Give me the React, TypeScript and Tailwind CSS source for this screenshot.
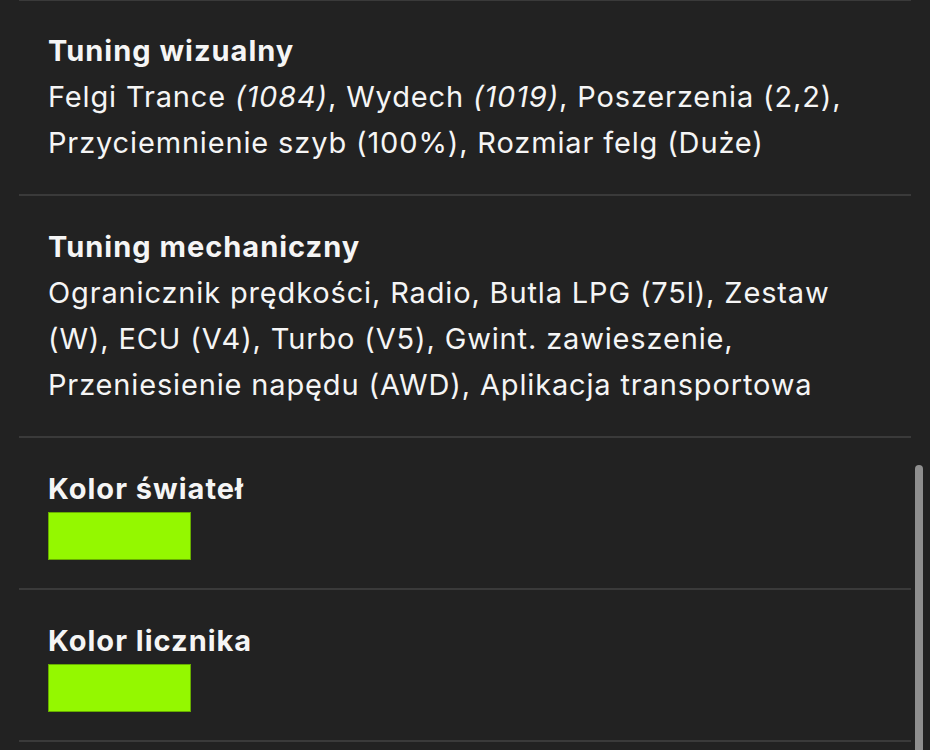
import React from "react";

type Section =
  | { kind: "text"; title: string; body: React.ReactNode }
  | { kind: "color"; title: string; color: string };

const sections: Section[] = [
  {
    kind: "text",
    title: "Tuning wizualny",
    body: (
      <>
        Felgi Trance <i>(1084)</i>, Wydech <i>(1019)</i>, Poszerzenia (2,2), Przyciemnienie szyb (100%), Rozmiar felg
        (Duże)
      </>
    ),
  },
  {
    kind: "text",
    title: "Tuning mechaniczny",
    body: (
      <>
        Ogranicznik prędkości, Radio, Butla LPG (75l), Zestaw (W), ECU (V4), Turbo (V5), Gwint. zawieszenie,
        Przeniesienie napędu (AWD), Aplikacja transportowa
      </>
    ),
  },
  { kind: "color", title: "Kolor świateł", color: "#94f800" },
  { kind: "color", title: "Kolor licznika", color: "#94f800" },
];

export default function App() {
  return (
    <div
      className="relative h-[750px] w-[930px] overflow-hidden bg-[#222222] text-[#f5f5f5]"
      style={{ fontFamily: "Inter, 'Noto Sans', sans-serif" }}
    >
      <div className="mx-[19px] border-t border-[#3a3a3a]">
        {sections.map((s, i) => (
          <div
            key={s.title}
            className={
              i === 0
                ? "border-b-2 border-[#3a3a3a] px-[29px] pb-[28px] pt-[27px]"
                : "border-b-2 border-[#3a3a3a] px-[29px] py-[28px]"
            }
          >
            <div className="text-[29px] font-bold leading-[46px] tracking-[1px]">{s.title}</div>
            {s.kind === "text" ? (
              <div className="text-[29px] leading-[46px] tracking-[0.85px]">{s.body}</div>
            ) : (
              <div className="h-[48px] w-[143px] border border-black/30" style={{ backgroundColor: s.color }} />
            )}
          </div>
        ))}
      </div>
      {/* scroll thumb */}
      <div className="absolute right-[7px] top-[465px] h-[300px] w-[8px] rounded-full bg-[#8f8f8f]" />
    </div>
  );
}
